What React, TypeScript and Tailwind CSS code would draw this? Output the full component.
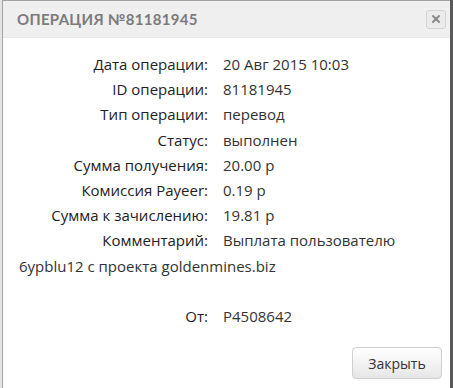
import { X } from 'lucide-react';

const rows: { label: string; value: string }[] = [
  { label: 'Дата операции:', value: '20 Авг 2015 10:03' },
  { label: 'ID операции:', value: '81181945' },
  { label: 'Тип операции:', value: 'перевод' },
  { label: 'Статус:', value: 'выполнен' },
  { label: 'Сумма получения:', value: '20.00 р' },
  { label: 'Комиссия Payeer:', value: '0.19 р' },
  { label: 'Сумма к зачислению:', value: '19.81 р' },
  { label: 'Комментарий:', value: 'Выплата пользователю' },
];

function Row({ label, value }: { label: string; value: string }) {
  return (
    <div className="flex px-4">
      <span className="w-[189px] shrink-0 text-right text-[#222]">{label}</span>
      <span className="ml-[15px]">{value}</span>
    </div>
  );
}

export default function App() {
  return (
    <div className="flex h-[388px] w-[453px] overflow-hidden bg-[#5a5a5a]">
      <div className="w-[2px] shrink-0 bg-[#e4e4e4]" />
      <div className="flex w-[448px] shrink-0 flex-col border-l border-t border-[#a3a3a3] bg-white">
        {/* Header */}
        <div className="flex h-[37px] items-center justify-between border-b border-[#e6e6e6] bg-[#efefef] pl-[14px] pr-[4px]">
          <h3 className="font-['Lato',sans-serif] text-[15px] font-bold tracking-[0.3px] text-[#7b7b7b]">
            ОПЕРАЦИЯ №81181945
          </h3>
          <button className="flex h-[19px] w-[20px] items-center justify-center rounded-[3px] border border-[#d4d4d4] bg-[#ebebeb]">
            <X size={12} strokeWidth={4} className="text-[#8a8a8a]" />
          </button>
        </div>

        {/* Body */}
        <div className="pt-[14px] font-['Open_Sans',sans-serif] text-[15px] leading-[25.2px] text-[#333]">
          {rows.map((r) => (
            <Row key={r.label} label={r.label} value={r.value} />
          ))}
          <div className="px-4">6ypblu12 с проекта goldenmines.biz</div>
          <div className="h-[25.2px]" />
          <Row label="От:" value="P4508642" />
        </div>

        {/* Footer */}
        <div className="mt-auto flex justify-end pb-[9px] pr-[8px]">
          <button className="h-[32px] w-[90px] rounded-[4px] border border-[#cfcfcf] bg-gradient-to-b from-white to-[#e6e6e6] font-['Open_Sans',sans-serif] text-[14px] text-[#333]">
            Закрыть
          </button>
        </div>
      </div>
    </div>
  );
}
